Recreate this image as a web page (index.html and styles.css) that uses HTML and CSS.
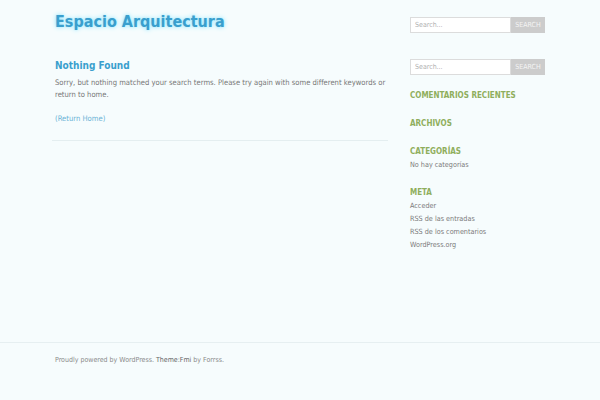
FILE: index.html
```html
<!DOCTYPE html>
<html lang="es">
<head>
<meta charset="utf-8">
<title>Espacio Arquitectura</title>
<link rel="stylesheet" href="styles.css">
</head>
<body>
<div class="page">
  <div class="wrap">
    <div class="main">
      <header class="site-header">
        <h1 class="site-title">Espacio Arquitectura</h1>
      </header>
      <article class="post">
        <h2 class="post-title">Nothing Found</h2>
        <div class="post-body">
          <p class="post-text">Sorry, but nothing matched your search terms. Please try again with some different keywords or return to home.</p>
        </div>
        <p class="post-link"><a href="#">(Return Home)</a></p>
      </article>
    </div>
    <aside class="sidebar">
      <form class="search">
        <input class="search-input" type="text" placeholder="Search...">
        <button class="search-btn" type="button">SEARCH</button>
      </form>
      <form class="search second">
        <input class="search-input" type="text" placeholder="Search...">
        <button class="search-btn" type="button">SEARCH</button>
      </form>
      <section class="widget"><h3 class="widget-title">COMENTARIOS RECIENTES</h3></section>
      <section class="widget"><h3 class="widget-title">ARCHIVOS</h3></section>
      <section class="widget">
        <h3 class="widget-title">CATEGORÍAS</h3>
        <ul class="widget-list"><li>No hay categorías</li></ul>
      </section>
      <section class="widget after-list">
        <h3 class="widget-title">META</h3>
        <ul class="widget-list">
          <li>Acceder</li>
          <li>RSS de las entradas</li>
          <li>RSS de los comentarios</li>
          <li>WordPress.org</li>
        </ul>
      </section>
    </aside>
  </div>
  <footer class="site-footer">
    <div class="footer-inner">Proudly powered by WordPress. <span class="theme">Theme:Fmi</span> by Forrss.</div>
  </footer>
</div>
</body>
</html>
```
FILE: styles.css
```css
html, body {
  margin: 0;
  padding: 0;
}
body {
  background: #f6fcfd;
  font-family: "DejaVu Sans Condensed", "DejaVu Sans", sans-serif;
  font-stretch: semi-condensed;
  color: #777;
  width: 600px;
  height: 400px;
  overflow: hidden;
}
.page {
  display: flex;
  flex-direction: column;
  height: 400px;
}
.wrap {
  display: flex;
  width: 490px;
  margin: 0 auto;
  gap: 22px;
  height: 342px;
}
.main {
  width: 336px;
  margin-left: -3px;
}
.site-header {
  height: 56px;
  padding-left: 3px;
}
.site-title {
  margin: 0;
  padding-top: 12px;
  font-size: 16px;
  line-height: 20px;
  font-weight: bold;
  color: #3a9fcd;
  text-shadow: 0 0 5px #8fe4ff, 0 0 2px #b8f0ff;
}
.post {
  padding: 3px 0 0 3px;
  border-bottom: 1px solid #e4eef0;
  height: 81px;
}
.post-title {
  margin: 0;
  font-size: 10px;
  line-height: 14px;
  font-weight: bold;
  color: #3a9fcd;
}
.post-body {
  width: 331px;
  overflow: hidden;
}
.post-text {
  margin: 4px 0 0;
  font-size: 7.6px;
  line-height: 12px;
  color: #777;
  width: 336px;
}
.post-link {
  margin: 12px 0 0;
  font-size: 7.6px;
  line-height: 12px;
}
.post-link a {
  color: #6ab3d6;
  text-decoration: none;
}
.sidebar {
  width: 135px;
  padding-top: 17px;
}
.search {
  display: flex;
  height: 16px;
}
.search.second {
  margin-top: 26px;
}
.search-input {
  box-sizing: border-box;
  width: 101px;
  height: 16px;
  margin: 0;
  border: 1px solid #dcdcdc;
  background: #fff;
  padding: 0 4px;
  font-family: "DejaVu Sans Condensed", "DejaVu Sans", sans-serif;
  font-size: 7px;
  color: #999;
}
.search-input::placeholder {
  color: #b0b0b0;
}
.search-btn {
  box-sizing: border-box;
  width: 34px;
  height: 16px;
  margin: 0;
  border: 0;
  padding: 0;
  background: #cccccc;
  color: #f4f4f4;
  font-family: "DejaVu Sans Condensed", "DejaVu Sans", sans-serif;
  font-size: 7px;
}
.widget {
  margin-top: 15px;
}
.widget + .widget {
  margin-top: 17px;
}
.widget.after-list {
  margin-top: 16px;
}
.widget-title {
  margin: 0;
  font-size: 8px;
  line-height: 11px;
  font-weight: bold;
  color: #8fae5c;
}
.widget-list {
  list-style: none;
  margin: 1px 0 0;
  padding: 0;
  font-size: 7.2px;
  line-height: 13px;
  color: #7a7a7a;
}
.site-footer {
  border-top: 1px solid #e6eff1;
  flex: 1;
}
.footer-inner {
  width: 490px;
  margin: 0 auto;
  padding-top: 12px;
  font-size: 7px;
  line-height: 10px;
  color: #8a8a8a;
}
.theme {
  color: #666;
}
```
